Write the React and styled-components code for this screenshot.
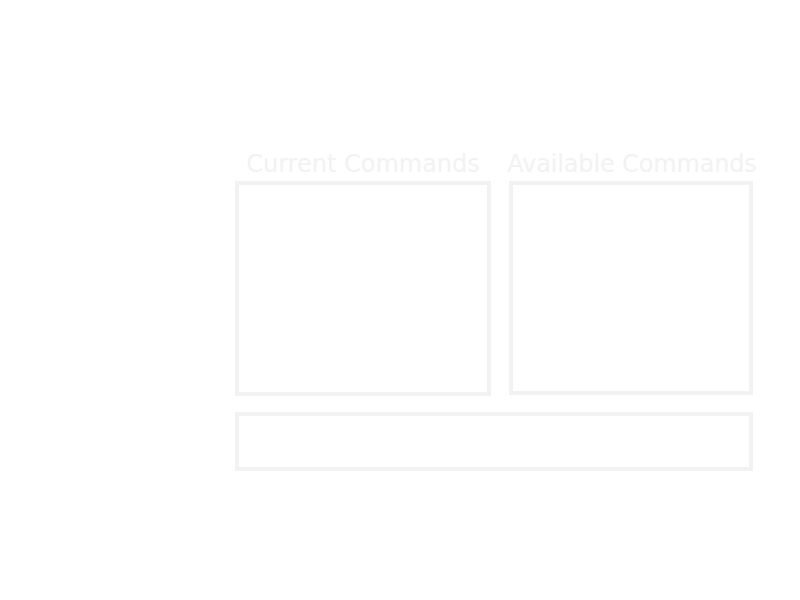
import React from "react";
import styled, { createGlobalStyle } from "styled-components";

const Global = createGlobalStyle`
  html, body { margin: 0; padding: 0; background: #ffffff; }
  body { font-family: "DejaVu Sans", sans-serif; }
`;

const Page = styled.div`
  width: 800px;
  height: 600px;
  box-sizing: border-box;
  padding: 150px 0 0 235px;
  display: flex;
  flex-direction: column;
  gap: 16px;
`;

const Row = styled.div`
  display: flex;
  gap: 18px;
  align-items: flex-start;
`;

const Column = styled.div`
  display: flex;
  flex-direction: column;
  align-items: center;
  width: ${(p) => p.$width}px;
  gap: 3px;
`;

const Title = styled.div`
  font-family: "DejaVu Sans", sans-serif;
  font-size: 24px;
  line-height: 28px;
  color: #f2f2f2;
  white-space: nowrap;
  letter-spacing: ${(p) => p.$spacing || 0}px;
  transform: translateX(${(p) => p.$shift || 0}px);
`;

const ListBox = styled.div`
  box-sizing: border-box;
  width: 100%;
  height: ${(p) => p.$height}px;
  border: 4px solid #f2f2f2;
  background: #ffffff;
`;

const Entry = styled.div`
  box-sizing: border-box;
  width: 518px;
  height: 59px;
  border: 4px solid #f2f2f2;
  background: #ffffff;
`;

export default function App() {
  return (
    <>
      <Global />
      <Page>
        <Row>
          <Column $width={256}>
            <Title>Current Commands</Title>
            <ListBox $height={215} />
          </Column>
          <Column $width={244}>
            <Title $spacing={-0.15} $shift={1}>Available Commands</Title>
            <ListBox $height={214} />
          </Column>
        </Row>
        <Entry />
      </Page>
    </>
  );
}
